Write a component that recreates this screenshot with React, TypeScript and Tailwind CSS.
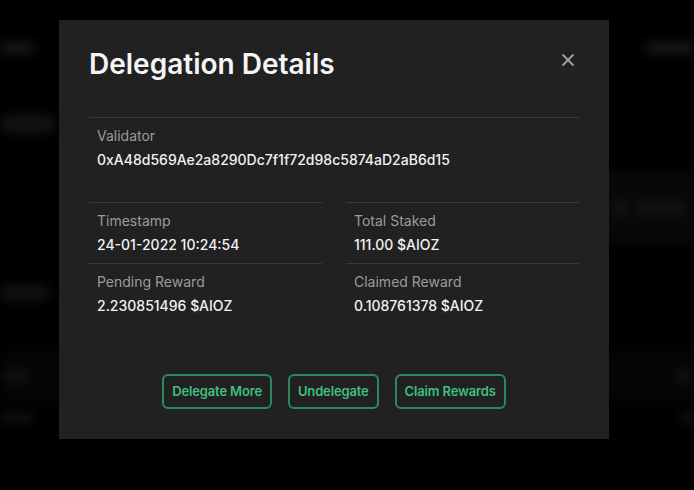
import { X } from "lucide-react";

const rows = [
  [
    { label: "Timestamp", value: "24-01-2022 10:24:54" },
    { label: "Total Staked", value: "111.00 $AIOZ" },
  ],
  [
    { label: "Pending Reward", value: "2.230851496 $AIOZ" },
    { label: "Claimed Reward", value: "0.108761378 $AIOZ" },
  ],
];

const actions = ["Delegate More", "Undelegate", "Claim Rewards"];

function Field({ label, value }: { label: string; value: string }) {
  return (
    <div className="border-t border-[#3a3a3a] px-2 pt-2 pb-2">
      <div className="text-[14px] leading-5 text-[#9b9b9b]">{label}</div>
      <div className="mt-1 text-[14px] font-medium leading-5 text-[#f2f2f2]">{value}</div>
    </div>
  );
}

function Backdrop() {
  // blurred page underneath the overlay
  return (
    <div className="flex h-full flex-col blur-[5px]">
      <div className="flex h-[95px] items-center justify-between">
        <div className="h-[14px] w-[36px] rounded-full bg-[#141414]" />
        <div className="h-[14px] w-[50px] rounded-full bg-[#141414]" />
      </div>
      <div className="flex items-start justify-between">
        <div className="mt-[20px] h-[18px] w-[55px] rounded-full bg-[#131313]" />
        <div className="mt-[75px] flex h-[75px] w-[90px] items-center gap-2 rounded-md bg-[#080808] pl-2">
          <div className="h-[16px] w-[16px] rounded-full bg-[#121212]" />
          <div className="h-[12px] w-[50px] rounded-full bg-[#121212]" />
        </div>
      </div>
      <div className="mt-[40px] flex items-center justify-between">
        <div className="h-[16px] w-[50px] rounded-full bg-[#101010]" />
      </div>
      <div className="mt-[50px] flex h-[50px] items-center justify-between bg-[#050505]">
        <div className="h-[12px] w-[30px] rounded-full bg-[#0f0f0f]" />
        <div className="h-[14px] w-[20px] rounded-full bg-[#0f0f0f]" />
      </div>
      <div className="mt-[10px] flex items-center justify-between">
        <div className="h-[10px] w-[35px] rounded-full bg-[#101010]" />
        <div className="h-[14px] w-[14px] rounded-full bg-[#101010]" />
      </div>
    </div>
  );
}

export default function App() {
  return (
    <div
      className="relative h-[490px] w-[694px] overflow-hidden bg-black"
      style={{ fontFamily: "Inter, 'Noto Sans', sans-serif" }}
    >
      <Backdrop />

      <div className="absolute left-[59px] top-[20px] flex h-[419px] w-[550px] flex-col bg-[#212121] px-[30px] pt-[26px]">
        <div className="flex items-start justify-between">
          <h2 className="text-[28px] font-semibold leading-9 text-[#f5f5f5]">
            Delegation Details
          </h2>
          <button className="mr-[1px] mt-[4px] text-[#a3a3a3]">
            <X size={20} strokeWidth={2.2} />
          </button>
        </div>

        <div className="mt-[35px] border-t border-[#3a3a3a] px-2 pt-2 pb-[32px]">
          <div className="text-[14px] leading-5 text-[#9b9b9b]">Validator</div>
          <div className="mt-1 text-[14px] font-medium leading-5 text-[#f2f2f2]">
            0xA48d569Ae2a8290Dc7f1f72d98c5874aD2aB6d15
          </div>
        </div>

        <div className="grid grid-cols-2 gap-x-6">
          {rows.flat().map((f) => (
            <Field key={f.label} label={f.label} value={f.value} />
          ))}
        </div>

        <div className="mt-[50px] flex justify-center gap-4">
          {actions.map((a) => (
            <button
              key={a}
              className="flex h-[35px] items-center rounded-md border-2 border-[#2b8a5c] px-2 text-[13px] font-semibold tracking-[-0.15px] text-[#3fbf7f]"
            >
              {a}
            </button>
          ))}
        </div>
      </div>
    </div>
  );
}
